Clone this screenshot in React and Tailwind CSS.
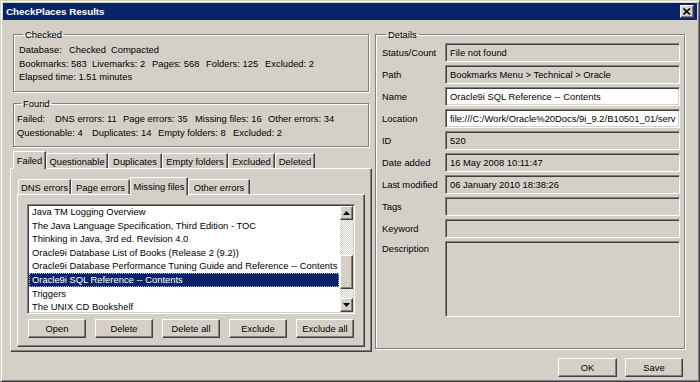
import React from 'react';

// classic 3D edges
const raised =
  'border border-t-white border-l-white border-r-[#404040] border-b-[#404040] shadow-[inset_-1px_-1px_0_#808080]';
const sunken =
  'border border-t-[#808080] border-l-[#808080] border-r-white border-b-white shadow-[inset_1px_1px_0_#404040,inset_-1px_-1px_0_#d4d0c8]';
const etched = 'border border-[#808080] shadow-[inset_1px_1px_0_#fff,1px_1px_0_#fff]';

const GroupBox = ({ title, className = '', children }) => (
  <fieldset className={`${etched} ${className}`}>
    <legend className="ml-[4px] px-[2px] leading-[13px]">{title}</legend>
    {children}
  </fieldset>
);

const Button = ({ children, className = '' }) => (
  <button className={`${raised} h-[19px] bg-[#d4d0c8] leading-[15px] ${className}`}>{children}</button>
);

const Tab = ({ label, selected, width }) => (
  <div
    style={{ width }}
    className={
      selected
        ? 'relative z-10 -mb-px h-[18px] pt-[2px] text-center bg-[#d4d0c8] border-t border-l border-white border-r border-r-[#404040] shadow-[inset_-1px_0_0_#808080] rounded-tl-[2px]'
        : 'h-[15px] pt-[1px] text-center border-t border-l border-white border-r border-r-[#404040] shadow-[inset_-1px_0_0_#808080] rounded-tl-[2px]'
    }
  >
    <span className="leading-[12px] whitespace-nowrap">{label}</span>
  </div>
);

const ScrollArrow = ({ up }) => (
  <div className={`${raised} h-[14px] w-[13px] bg-[#d4d0c8] flex items-center justify-center`}>
    <svg width="7" height="4" viewBox="0 0 7 4">
      {up ? <polygon points="3.5,0 7,4 0,4" fill="#000" /> : <polygon points="0,0 7,0 3.5,4" fill="#000" />}
    </svg>
  </div>
);

const Field = ({ label, value = '', white = false, tall = false }) => (
  <div className="flex items-start">
    <div className={`w-[63px] shrink-0 ${tall ? 'pt-[1px]' : 'pt-[3px]'} leading-[13px] whitespace-nowrap`}>{label}</div>
    <div
      className={`${sunken} w-[235px] ${tall ? 'h-[76px]' : 'h-[19px]'} ${white ? 'bg-white' : 'bg-[#d4d0c8]'} px-[4px] pt-[2px] leading-[13px] overflow-hidden whitespace-nowrap`}
    >
      {value}
    </div>
  </div>
);

// a row of labels, each starting at a fixed column
const InfoRow = ({ cols }) => (
  <div className="flex whitespace-nowrap">
    {cols.map(([text, w]) => (
      <span key={text} style={{ width: w }} className="shrink-0">
        {text}
      </span>
    ))}
  </div>
);

export default function App() {
  const items = [
    'Java TM Logging Overview',
    'The Java Language Specification, Third Edition - TOC',
    'Thinking in Java, 3rd ed. Revision 4.0',
    'Oracle9i Database List of Books (Release 2 (9.2))',
    'Oracle9i Database Performance Tuning Guide and Reference -- Contents',
    'Oracle9i SQL Reference -- Contents',
    'Triggers',
    'The UNIX CD Bookshelf',
  ];
  const selected = 5;

  return (
    <div className="w-[700px] h-[382px] overflow-hidden bg-[#d4d0c8] text-black text-[9.4px] font-['Liberation_Sans',Arial,sans-serif] border border-t-[#d4d0c8] border-l-[#d4d0c8] border-r-[#404040] border-b-[#404040] shadow-[inset_1px_1px_0_#fff,inset_-1px_-1px_0_#808080] px-[2px] pt-[2px] flex flex-col">
      {/* title bar */}
      <div className="h-[17px] bg-[#0a246a] flex items-center justify-between pl-[3px] pr-[3px]">
        <span className="text-white font-bold text-[9.8px] leading-[13px]">CheckPlaces Results</span>
        <div className={`${raised} h-[13px] w-[14px] bg-[#d4d0c8] flex items-center justify-center`}>
          <svg width="8" height="7" viewBox="0 0 8 7">
            <path d="M0.5 0.5 L7 6.5 M7 0.5 L0.5 6.5" stroke="#000" strokeWidth="1.6" />
          </svg>
        </div>
      </div>

      <div className="flex pl-[7px] pt-[8px]">
        {/* left column */}
        <div className="w-[362px] flex flex-col">
          <GroupBox title="Checked" className="mx-[3px] pl-[5px] h-[64px]">
            <div className="leading-[13.5px] pt-[2px]">
              <InfoRow cols={[['Database:', 50], ['Checked', 42], ['Compacted', 60]]} />
              <InfoRow
                cols={[
                  ['Bookmarks: 583', 73],
                  ['Livemarks: 2', 60],
                  ['Pages: 568', 54],
                  ['Folders: 125', 59],
                  ['Excluded: 2', 60],
                ]}
              />
              <div>Elapsed time: 1.51 minutes</div>
            </div>
          </GroupBox>

          <GroupBox title="Found" className="mx-[3px] mt-[5px] pl-[3px] h-[50px]">
            <div className="leading-[13.5px] pt-[2px]">
              <InfoRow
                cols={[
                  ['Failed:', 38],
                  ['DNS errors: 11', 68],
                  ['Page errors: 35', 72],
                  ['Missing files: 16', 73],
                  ['Other errors: 34', 80],
                ]}
              />
              <InfoRow
                cols={[
                  ['Questionable: 4', 75],
                  ['Duplicates: 14', 66],
                  ['Empty folders: 8', 75],
                  ['Excluded: 2', 60],
                ]}
              />
            </div>
          </GroupBox>

          {/* outer tabs */}
          <div className="mt-[4px] flex items-end pl-[3px]">
            <Tab label="Failed" selected width={33} />
            <Tab label="Questionable" width={62} />
            <Tab label="Duplicates" width={54} />
            <Tab label="Empty folders" width={66} />
            <Tab label="Excluded" width={47} />
            <Tab label="Deleted" width={40} />
          </div>
          <div className={`${raised} h-[184px] px-[6px] pt-[8px]`}>
            {/* inner tabs */}
            <div className="flex items-end pl-[1px]">
              <Tab label="DNS errors" width={53} />
              <Tab label="Page errors" width={59} />
              <Tab label="Missing files" selected width={58} />
              <Tab label="Other errors" width={62} />
            </div>
            <div className={`${raised} h-[153px] px-[9px] pt-[9px]`}>
              <div className={`${sunken} h-[110px] bg-white flex px-[1px] pb-[1px]`}>
                <div className="flex-1 leading-[13.6px] pr-[1px]">
                  {items.map((item, i) => (
                    <div
                      key={item}
                      className={
                        i === selected
                          ? 'bg-[#0a246a] text-white pl-[3px] outline outline-1 outline-dotted outline-[#a6b4d8] -outline-offset-1 whitespace-nowrap'
                          : 'pl-[3px] whitespace-nowrap'
                      }
                    >
                      {item}
                    </div>
                  ))}
                </div>
                <div className="w-[13px] mt-[1px] flex flex-col bg-[repeating-conic-gradient(#d4d0c8_0_25%,#fff_0_50%)] bg-[length:2px_2px]">
                  <ScrollArrow up />
                  <div className="h-[35px]" />
                  <div className={`${raised} h-[34px] bg-[#d4d0c8]`} />
                  <div className="flex-1" />
                  <ScrollArrow />
                </div>
              </div>
              <div className="flex gap-[9px] mt-[5px] pl-[1px]">
                <Button className="w-[58px]">Open</Button>
                <Button className="w-[58px]">Delete</Button>
                <Button className="w-[58px]">Delete all</Button>
                <Button className="w-[58px]">Exclude</Button>
                <Button className="w-[58px]">Exclude all</Button>
              </div>
            </div>
          </div>
        </div>

        {/* right column */}
        <div className="ml-[3px] w-[310px] flex flex-col">
          <GroupBox title="Details" className="h-[321px] pl-[6px] pt-[2px]">
            <div className="flex flex-col gap-[3px]">
              <Field label="Status/Count" value="File not found" />
              <Field label="Path" value="Bookmarks Menu > Technical > Oracle" />
              <Field label="Name" value="Oracle9i SQL Reference -- Contents" white />
              <Field label="Location" value="file:///C:/Work/Oracle%20Docs/9i_9.2/B10501_01/serv" white />
              <Field label="ID" value="520" />
              <Field label="Date added" value="16 May 2008 10:11:47" />
              <Field label="Last modified" value="06 January 2010 18:38:26" />
              <Field label="Tags" />
              <Field label="Keyword" />
              <Field label="Description" tall />
            </div>
          </GroupBox>
          <div className="flex justify-end gap-[8px] mt-[9px] pr-[2px]">
            <Button className="w-[59px]">OK</Button>
            <Button className="w-[58px]">Save</Button>
          </div>
        </div>
      </div>
    </div>
  );
}
